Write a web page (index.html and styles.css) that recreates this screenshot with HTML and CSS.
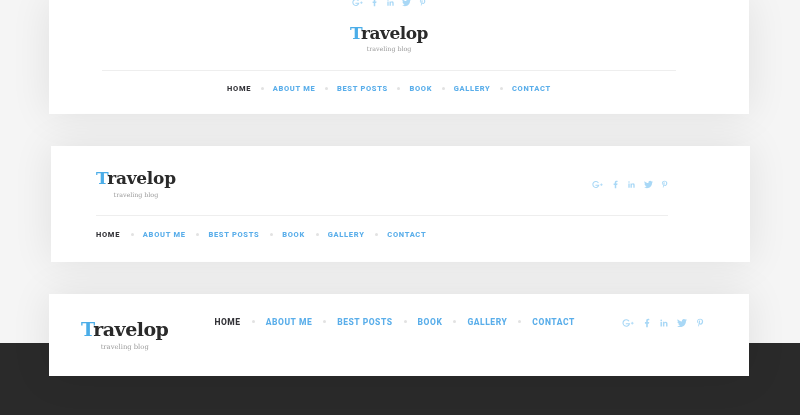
FILE: index.html
```html
<!DOCTYPE html>
<html>

<head>
  <meta name="viewport" content="width=device-width, user-scalable=no" />
  <link rel="stylesheet" href="styles.css">
</head>

<body>

<svg class="sprite" width="0" height="0">
  <symbol id="i-gplus" viewBox="0 0 34 24">
    <path d="M21 7.500A8.500 8.500 0 1 0 22 14H12.500" fill="none" stroke="currentColor" stroke-width="3"/>
    <path d="M26 12.500h7M29.500 9v7" fill="none" stroke="currentColor" stroke-width="2.200"/>
  </symbol>
  <symbol id="i-fb" viewBox="0 0 24 24">
    <path d="M14 13.500h2.500l1-4H14v-2c0-1.030 0-2 2-2h1.500V2.140c-.326-.043-1.557-.14-2.857-.14C11.928 2 10 3.657 10 6.700v2.800H7v4h3V22h4v-8.500z"/>
  </symbol>
  <symbol id="i-in" viewBox="0 0 24 24">
    <path d="M20.447 20.452h-3.554v-5.569c0-1.328-.027-3.037-1.852-3.037-1.853 0-2.136 1.445-2.136 2.939v5.667H9.351V9h3.414v1.561h.046c.477-.9 1.637-1.850 3.370-1.850 3.601 0 4.267 2.370 4.267 5.455v6.286zM5.337 7.433a2.062 2.062 0 01-2.063-2.065 2.064 2.064 0 112.063 2.065zm1.782 13.019H3.555V9h3.564v11.452z"/>
  </symbol>
  <symbol id="i-tw" viewBox="0 0 24 24">
    <path d="M23.953 4.570a10 10 0 01-2.825.775 4.958 4.958 0 002.163-2.723c-.951.555-2.005.959-3.127 1.184a4.920 4.920 0 00-8.384 4.482C7.690 8.095 4.067 6.130 1.640 3.162a4.822 4.822 0 00-.666 2.475c0 1.710.870 3.213 2.188 4.096a4.904 4.904 0 01-2.228-.616v.060a4.923 4.923 0 003.946 4.827 4.996 4.996 0 01-2.212.085 4.936 4.936 0 004.604 3.417 9.867 9.867 0 01-6.102 2.105c-.390 0-.779-.023-1.170-.067a13.995 13.995 0 007.557 2.209c9.053 0 13.998-7.496 13.998-13.985 0-.210 0-.420-.015-.630A9.935 9.935 0 0024 4.590z"/>
  </symbol>
  <symbol id="i-pin" viewBox="0 0 24 24">
    <path d="M12.500 2C7.500 2 5 5.400 5 8.400c0 1.800.7 3.400 2.200 4 .2.1.5 0 .5-.3l.2-.9c.1-.3 0-.4-.1-.6-.4-.5-.7-1.100-.7-2 0-2.600 2-4.900 5.100-4.900 2.800 0 4.300 1.700 4.300 4 0 3-1.300 5.500-3.300 5.500-1.100 0-1.900-.9-1.600-2 .3-1.300.9-2.700.9-3.700 0-.9-.5-1.600-1.400-1.600-1.100 0-2 1.200-2 2.700 0 1 .3 1.600.3 1.600L7.900 17c-.4 1.600-.1 3.600 0 3.800 0 .1.2.1.2.1.1-.1 1.400-1.800 1.900-3.500l.8-2.900c.4.700 1.500 1.400 2.700 1.400 3.600 0 6-3.300 6-7.600C19.500 4.900 16.700 2 12.500 2z"/>
  </symbol>
</svg>

<!-- centered header -->
<div class="card card-center">
  <div class="social">
    <svg class="gplus"><use href="#i-gplus"/></svg>
    <svg><use href="#i-fb"/></svg>
    <svg><use href="#i-in"/></svg>
    <svg><use href="#i-tw"/></svg>
    <svg><use href="#i-pin"/></svg>
  </div>
  <div class="logo">
    <div class="logo-name"><span>T</span>ravelop</div>
    <div class="logo-sub">traveling blog</div>
  </div>
  <div class="rule"></div>
  <ul class="nav">
    <li class="active">HOME</li>
    <li>ABOUT ME</li>
    <li>BEST POSTS</li>
    <li>BOOK</li>
    <li>GALLERY</li>
    <li>CONTACT</li>
  </ul>
</div>

<!-- two rows header -->
<div class="card card-rows">
  <div class="rows-top">
    <div class="logo">
      <div class="logo-name"><span>T</span>ravelop</div>
      <div class="logo-sub">traveling blog</div>
    </div>
    <div class="social">
      <svg class="gplus"><use href="#i-gplus"/></svg>
      <svg><use href="#i-fb"/></svg>
      <svg><use href="#i-in"/></svg>
      <svg><use href="#i-tw"/></svg>
      <svg><use href="#i-pin"/></svg>
    </div>
  </div>
  <div class="rule"></div>
  <ul class="nav">
    <li class="active">HOME</li>
    <li>ABOUT ME</li>
    <li>BEST POSTS</li>
    <li>BOOK</li>
    <li>GALLERY</li>
    <li>CONTACT</li>
  </ul>
</div>

<!-- single row header -->
<div class="card card-line">
  <div class="logo">
    <div class="logo-name"><span>T</span>ravelop</div>
    <div class="logo-sub">traveling blog</div>
  </div>
  <ul class="nav">
    <li class="active">HOME</li>
    <li>ABOUT ME</li>
    <li>BEST POSTS</li>
    <li>BOOK</li>
    <li>GALLERY</li>
    <li>CONTACT</li>
  </ul>
  <div class="social">
    <svg class="gplus"><use href="#i-gplus"/></svg>
    <svg><use href="#i-fb"/></svg>
    <svg><use href="#i-in"/></svg>
    <svg><use href="#i-tw"/></svg>
    <svg><use href="#i-pin"/></svg>
  </div>
</div>

</body>
</html>
```

FILE: styles.css
```css
html {
  height: 100%;
}
body {
  width: 800px;
  height: 415px;
  margin: 0px;
  overflow: hidden;
  background: linear-gradient(#f5f5f5 343px, #2a2a2a 343px);
  font-family: "Roboto", sans-serif;
}

.sprite {
  display: block;
}

.card {
  box-sizing: border-box;
  width: 700px;
  margin-left: 49px;
  margin-bottom: 32px;
  background-color: white;
  box-shadow: 0px 0px 40px rgba(0, 0, 0, 0.09);
}

.card-center {
  height: 114px;
  padding: 0px 73px 0px 53px;
  overflow: hidden;
  display: flex;
  flex-direction: column;
  align-items: center;
}
.card-rows {
  height: 116px;
  margin-left: 51px;
  width: 699px;
  padding: 21px 82px 0px 45px;
}
.rows-top {
  display: flex;
  justify-content: space-between;
  align-items: flex-start;
}
.card-line {
  height: 82px;
  padding: 0px 45px 0px 32px;
  display: flex;
  align-items: flex-start;
}

/* logo */
.logo {
  text-align: center;
  filter: blur(0.25px);
}
.logo-name {
  font-family: "DejaVu Serif", serif;
  font-weight: 700;
  color: #2a2a2a;
  font-size: 17px;
  letter-spacing: -0.500px;
  line-height: 22px;
}
.logo-name span {
  color: #4bade8;
}
.logo-sub {
  font-family: "DejaVu Serif", serif;
  font-size: 6.300px;
  line-height: 10px;
  color: #9a9a9a;
}
.card-center .logo {
  margin-top: 15px;
}
.card-line .logo {
  margin-top: 23px;
}
.card-line .logo-name {
  font-size: 19px;
  line-height: 24px;
}
.card-line .logo-sub {
  font-size: 6.800px;
  margin-top: 1px;
}
.card-rows .logo-name {
  letter-spacing: -0.250px;
}
.card-rows .logo-sub {
  margin-top: 1px;
}

.rule {
  height: 1px;
  background-color: #eeeeee;
}
.card-center .rule {
  align-self: stretch;
  margin-top: 16px;
}
.card-rows .rule {
  margin-top: 15px;
}

/* nav */
.nav {
  list-style: none;
  margin: 0px;
  padding: 0px;
  display: flex;
  gap: 21.500px;
  font-size: 7.500px;
  font-weight: 800;
  letter-spacing: 0.700px;
  line-height: 10px;
  color: #5aaeea;
  filter: blur(0.2px);
}
.nav li {
  position: relative;
}
.nav li + li::before {
  content: "";
  position: absolute;
  left: -12px;
  top: 3px;
  width: 3px;
  height: 3px;
  border-radius: 50%;
  background-color: #e2e2e2;
}
.nav .active {
  color: #333338;
}
.card-center .nav {
  margin-top: 13px;
}
.card-rows .nav {
  margin-top: 14px;
  gap: 22.800px;
}
.card-line .nav {
  margin-top: 23px;
  margin-left: 46px;
  gap: 25px;
  font-size: 8.500px;
  letter-spacing: 0.550px;
}
.card-line .nav li + li::before {
  left: -14px;
}

/* social */
.social {
  display: flex;
  align-items: center;
  gap: 7px;
  color: #a9d8f6;
  filter: blur(0.25px);
}
.social svg {
  width: 9px;
  height: 9px;
  fill: currentColor;
}
.social .gplus {
  width: 12px;
}
.card-center .social {
  margin-top: -2px;
}
.card-rows .social {
  margin-top: 13px;
  margin-right: -1px;
  gap: 7.500px;
}
.card-line .social {
  margin-top: 24px;
  margin-left: auto;
  margin-right: -1px;
  gap: 7.800px;
}
.card-line .social svg {
  width: 10px;
  height: 10px;
}
.card-line .social .gplus {
  width: 13px;
}
```
